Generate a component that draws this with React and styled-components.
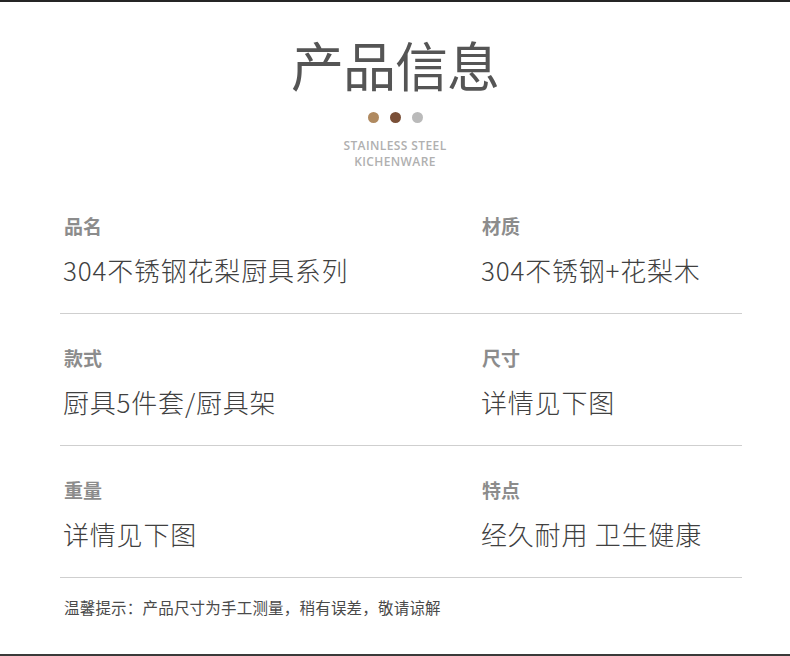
import React from 'react';
import styled, {createGlobalStyle} from 'styled-components';

const GlobalStyle = createGlobalStyle`
  html, body {
    margin: 0;
    padding: 0;
    background: #fff;
  }
  body {
    font-family: "Noto Sans CJK SC", "Noto Sans", sans-serif;
  }
`;

const Page = styled.div`
  width: 790px;
  min-height: 656px;
  display: flex;
  flex-direction: column;
  background: #fff;
`;

const EdgeBar = styled.div`
  height: 2px;
  background: ${(props) => props.bg};
  margin-top: ${(props) => (props.bottom ? 'auto' : '0')};
`;

const Header = styled.header`
  display: flex;
  flex-direction: column;
  align-items: center;
  padding-top: 35px;
`;

const Title = styled.h1`
  margin: 0;
  font-size: 53px;
  line-height: 54px;
  font-weight: 400;
  color: #555;
  letter-spacing: -1px;
`;

const Dots = styled.div`
  display: flex;
  gap: 11px;
  margin-top: 21px;
`;

const Dot = styled.span`
  width: 11px;
  height: 11px;
  border-radius: 50%;
  background: ${(props) => props.color};
`;

const Subtitle = styled.div`
  margin-top: 15px;
  font-family: "Open Sans", "Noto Sans", sans-serif;
  font-weight: 600;
  font-size: 12px;
  line-height: 16px;
  color: #b0b0b0;
  text-align: center;
  letter-spacing: 0.4px;
`;

const Table = styled.section`
  margin: 12px 48px 0 60px;
`;

const Row = styled.div`
  display: grid;
  grid-template-columns: 420px 1fr;
  padding: 32px 0 28px;
  border-bottom: 1px solid #cfcfcf;
`;

const Cell = styled.div`
  display: flex;
  flex-direction: column;
  gap: 17px;
  padding-left: ${(props) => (props.right ? '1px' : '3px')};
`;

const Label = styled.div`
  font-size: 19px;
  line-height: 24px;
  font-weight: 700;
  color: #8c8c8c;
  padding-left: 1px;
`;

const Value = styled.div`
  font-size: 26px;
  line-height: 30px;
  font-weight: 300;
  color: #404040;
  letter-spacing: 0.8px;
  white-space: nowrap;
`;

const Note = styled.p`
  margin: 19px 0 0 4px;
  font-size: 15.5px;
  line-height: 20px;
  color: #4a4a4a;
  letter-spacing: 0.2px;
`;

const rows = [
  [
    {label: '品名', value: '304不锈钢花梨厨具系列'},
    {label: '材质', value: '304不锈钢+花梨木'},
  ],
  [
    {label: '款式', value: '厨具5件套/厨具架'},
    {label: '尺寸', value: '详情见下图'},
  ],
  [
    {label: '重量', value: '详情见下图'},
    {label: '特点', value: '经久耐用 卫生健康'},
  ],
];

const App = () => {
  return (
    <Page>
      <GlobalStyle />
      <EdgeBar bg='#252525' />
      <Header>
        <Title>产品信息</Title>
        <Dots>
          <Dot color='#b08a60' />
          <Dot color='#7a4f37' />
          <Dot color='#bababa' />
        </Dots>
        <Subtitle>
          STAINLESS STEEL
          <br />
          KICHENWARE
        </Subtitle>
      </Header>
      <Table>
        {rows.map((row, i) => (
          <Row key={i}>
            {row.map((item, j) => (
              <Cell key={item.label} right={j === 1}>
                <Label>{item.label}</Label>
                <Value>{item.value}</Value>
              </Cell>
            ))}
          </Row>
        ))}
        <Note>温馨提示：产品尺寸为手工测量，稍有误差，敬请谅解</Note>
      </Table>
      <EdgeBar bg='#3a3a3a' bottom />
    </Page>
  );
};

export default App;
